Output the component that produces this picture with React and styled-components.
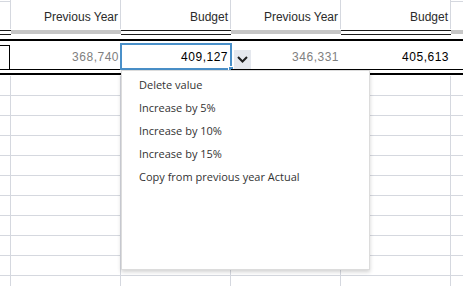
import React from "react";
import styled, { createGlobalStyle } from "styled-components";

const GRID = "#d5d8df";

const GlobalStyle = createGlobalStyle`
  html, body {
    margin: 0;
    padding: 0;
    background: #ffffff;
    overflow: hidden;
  }
`;

const columns = [
  { key: "c0" },
  { key: "c1", label: "Previous Year", kind: "prev", value: "368,740" },
  { key: "c2", label: "Budget", kind: "budget", value: "409,127", selected: true },
  { key: "c3", label: "Previous Year", kind: "prev", value: "346,331" },
  { key: "c4", label: "Budget", kind: "budget", value: "405,613" },
  { key: "c5" },
];

const menuItems = [
  "Delete value",
  "Increase by 5%",
  "Increase by 10%",
  "Increase by 15%",
  "Copy from previous year Actual",
];

const Page = styled.div`
  position: relative;
  width: 463px;
  height: 286px;
  overflow: hidden;
  font-family: "Liberation Sans", Arial, sans-serif;
`;

const Sheet = styled.div`
  display: grid;
  grid-template-columns: 11px 110px 110px 110px 110px 1fr;
`;

const HeaderCell = styled.div`
  height: 29px;
  box-sizing: border-box;
  display: flex;
  align-items: center;
  justify-content: flex-end;
  padding: 5px 2px 0 0;
  font-size: 12px;
  color: #2b2b2b;
  border-right: ${(p) => (p.$last ? "none" : `1px solid ${GRID}`)};
  background: ${(p) =>
    p.$edge ? `linear-gradient(${GRID}, ${GRID}) 0 1px / 100% 1px no-repeat` : "none"};
`;

const BandCell = styled.div`
  height: 10px;
  box-sizing: border-box;
  ${(p) =>
    p.$kind === "bar"
      ? `background: linear-gradient(#c6c6c6, #c6c6c6) 0 1px / 100% 4px no-repeat;`
      : `background:
          linear-gradient(#1a1a1a, #1a1a1a) 0 1px / 100% 1px no-repeat,
          linear-gradient(#1a1a1a, #1a1a1a) 0 5px / 100% 1px no-repeat;`}
`;

const ThickRule = styled.div`
  grid-column: 1 / -1;
  height: 2px;
  background: #000;
  margin-top: ${(p) => (p.$gap ? "3px" : "0")};
  margin-bottom: ${(p) => (p.$gap ? "1px" : "0")};
`;

const DataCell = styled.div`
  position: relative;
  height: 29px;
  box-sizing: border-box;
  border-bottom: 1px solid #000;
  display: flex;
  align-items: center;
  justify-content: flex-end;
  padding: 4px 2px 0 0;
  font-size: 12px;
  letter-spacing: 0.5px;
  color: ${(p) => (p.$muted ? "#808080" : "#000")};
`;

const StubBox = styled.div`
  position: absolute;
  left: -2px;
  right: 1px;
  top: 4px;
  bottom: -1px;
  border: 1px solid #000;
`;

const Selection = styled.div`
  position: absolute;
  left: -1px;
  right: -1px;
  top: 2px;
  bottom: -1px;
  border: 2px solid #4a90c9;
`;

const FillHandle = styled.span`
  position: absolute;
  right: -4px;
  bottom: -4px;
  width: 4px;
  height: 4px;
  background: #4a90c9;
  border: 1px solid #fff;
`;

const CellValue = styled.span`
  position: relative;
  padding-right: ${(p) => (p.$selected ? "1px" : "0")};
`;

const DropButton = styled.div`
  position: absolute;
  left: calc(100% + 3px);
  top: 9px;
  width: 17px;
  height: 19px;
  background: #e5e8ee;
  display: flex;
  align-items: center;
  justify-content: center;
`;

const BodyCell = styled.div`
  height: 20px;
  box-sizing: border-box;
  border-bottom: 1px solid ${GRID};
  border-right: ${(p) => (p.$last ? "none" : `1px solid ${GRID}`)};
`;

const Menu = styled.div`
  position: absolute;
  left: 121px;
  top: 70px;
  width: 249px;
  height: 200px;
  box-sizing: border-box;
  background: #fff;
  border: 1px solid #dcdcdc;
  box-shadow: 0 2px 4px rgba(0, 0, 0, 0.18);
  padding-top: 2px;
  font-family: "Open Sans", "Noto Sans", sans-serif;
  font-size: 11px;
  color: #333;
`;

const MenuItem = styled.div`
  height: 23px;
  line-height: 23px;
  padding-left: 17px;
  white-space: nowrap;
`;

const Chevron = () => (
  <svg width="11" height="7" viewBox="0 0 11 7">
    <path d="M1 1 L5.5 5.5 L10 1" fill="none" stroke="#1f1f1f" strokeWidth="2" />
  </svg>
);

export default function App() {
  const bodyRows = Array.from({ length: 11 }, (_, i) => i);
  return (
    <Page>
      <GlobalStyle />
      <Sheet>
        {columns.map((c, i) => (
          <HeaderCell key={c.key} $edge={!c.label} $last={i === columns.length - 1}>
            {c.label}
          </HeaderCell>
        ))}
        {columns.map((c) => (
          <BandCell key={c.key} $kind={c.kind === "budget" || c.key === "c0" ? "double" : "bar"} />
        ))}
        <ThickRule />
        {columns.map((c) => (
          <DataCell key={c.key} $muted={c.kind === "prev"}>
            {c.key === "c0" && <StubBox />}
            {c.selected && (
              <>
                <Selection>
                  <FillHandle />
                </Selection>
                <DropButton>
                  <Chevron />
                </DropButton>
              </>
            )}
            {c.value && <CellValue $selected={c.selected}>{c.value}</CellValue>}
          </DataCell>
        ))}
        <ThickRule $gap />
        {bodyRows.map((r) =>
          columns.map((c, i) => (
            <BodyCell key={`${r}-${c.key}`} $last={i === columns.length - 1} />
          ))
        )}
      </Sheet>
      <Menu>
        {menuItems.map((m) => (
          <MenuItem key={m}>{m}</MenuItem>
        ))}
      </Menu>
    </Page>
  );
}
